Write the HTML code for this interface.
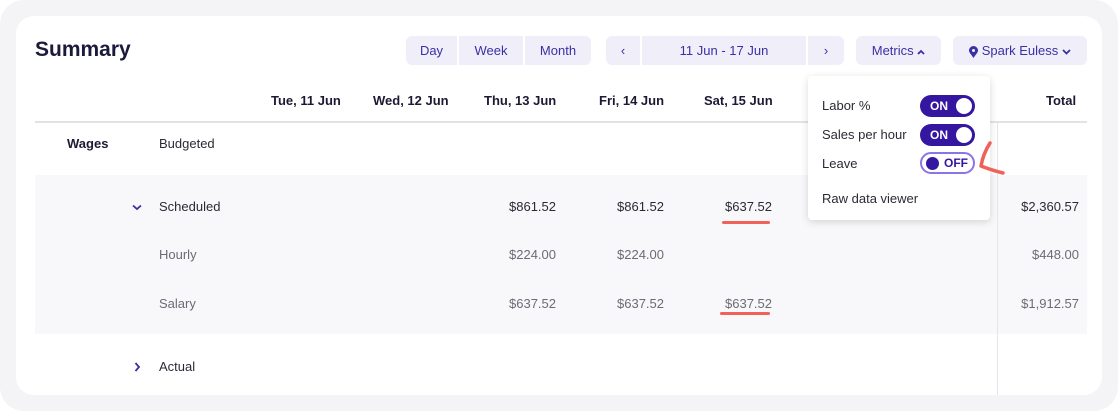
<!DOCTYPE html><html><head><style>
*{margin:0;padding:0;box-sizing:border-box}
body{width:1118px;height:411px;background:#fff;font-family:"Liberation Sans",sans-serif;position:relative;overflow:hidden}
.outer{position:absolute;left:0;top:0;width:1118px;height:411px;background:#f4f4f7;border-radius:24px}
.card{position:absolute;left:16px;top:16px;width:1086px;height:379px;background:#fff;border-radius:18px}
.a{position:absolute;white-space:nowrap}
.btn{position:absolute;top:36px;height:29px;background:#f0eff9;color:#3b2fa6;font-size:13px;line-height:29px;text-align:center}
.btn svg{vertical-align:middle}
.h{font-weight:bold;font-size:13px;color:#1c1a33;top:93px}
.r{text-align:right}
.v{font-size:13px;color:#2a2a35}
.g{font-size:13px;color:#6b6b75}
.tog{position:absolute;left:920px;width:55px;height:22px;border-radius:11px;background:#3416a0;color:#fff;font-size:12px;font-weight:bold;line-height:22px;padding-left:10px}
.tog i{position:absolute;right:3px;top:3px;width:16px;height:16px;border-radius:50%;background:#fff}
</style></head><body>
<div class="outer"></div><div class="card"></div>
<div class="a" style="left:35px;top:38px;font-size:21px;font-weight:bold;color:#1c1a3a">Summary</div>
<div class="btn" style="left:406px;width:51px;border-radius:6px 0 0 6px">Day</div>
<div class="btn" style="left:459px;width:64px">Week</div>
<div class="btn" style="left:525px;width:66px;border-radius:0 6px 6px 0">Month</div>
<div class="btn" style="left:606px;width:34px;border-radius:6px 0 0 6px">‹</div>
<div class="btn" style="left:642px;width:164px">11 Jun - 17 Jun</div>
<div class="btn" style="left:808px;width:36px;border-radius:0 6px 6px 0">›</div>
<div class="btn" style="left:856px;width:85px;border-radius:6px">Metrics <svg width="8" height="6" viewBox="0 0 8 6"><path d="M1 5 L4 2 L7 5" stroke="#3b2fa6" stroke-width="1.8" fill="none"/></svg></div>
<div class="btn" style="left:953px;width:134px;border-radius:6px"><svg width="9" height="12" viewBox="0 0 9 12"><path d="M4.5 12 C1 7 0 6 0 4.5 A4.5 4.5 0 0 1 9 4.5 C9 6 8 7 4.5 12Z M4.5 3 A1.5 1.5 0 1 0 4.5 6 A1.5 1.5 0 1 0 4.5 3Z" fill="#3b2fa6" fill-rule="evenodd"/></svg> Spark Euless <svg width="9" height="6" viewBox="0 0 9 6"><path d="M1 1 L4.5 4.5 L8 1" stroke="#3b2fa6" stroke-width="1.8" fill="none"/></svg></div>
<div class="a h" style="left:271px">Tue, 11 Jun</div>
<div class="a h" style="left:373px">Wed, 12 Jun</div>
<div class="a h" style="left:484px">Thu, 13 Jun</div>
<div class="a h" style="left:599px">Fri, 14 Jun</div>
<div class="a h" style="left:704px">Sat, 15 Jun</div>
<div class="a h" style="left:1046px">Total</div>
<div class="a" style="left:35px;top:121px;width:1052px;height:2px;background:#e2e2e6"></div>
<div class="a" style="left:35px;top:175px;width:1052px;height:159px;background:#f8f8fa"></div>
<div class="a" style="left:997px;top:122px;width:1px;height:273px;background:#e6e6ea"></div>
<div class="a" style="left:67px;top:136px;font-size:13px;font-weight:bold;color:#1c1a33">Wages</div>
<div class="a v" style="left:159px;top:136px">Budgeted</div>
<svg class="a" style="left:132px;top:204px" width="10" height="7" viewBox="0 0 10 7"><path d="M1 1.5 L5 5 L9 1.5" stroke="#3b2fa6" stroke-width="1.8" fill="none"/></svg>
<div class="a v" style="left:159px;top:199px">Scheduled</div>
<div class="a g" style="left:159px;top:247px">Hourly</div>
<div class="a g" style="left:159px;top:296px">Salary</div>
<svg class="a" style="left:134px;top:362px" width="7" height="10" viewBox="0 0 7 10"><path d="M1.5 1 L5 5 L1.5 9" stroke="#3b2fa6" stroke-width="1.8" fill="none"/></svg>
<div class="a v" style="left:159px;top:359px">Actual</div>
<div class="a v r" style="left:476px;width:80px;top:199px">$861.52</div>
<div class="a v r" style="left:584px;width:80px;top:199px">$861.52</div>
<div class="a v" style="left:725px;top:199px">$637.52</div>
<div class="a v r" style="left:1000px;width:79px;top:199px">$2,360.57</div>
<div class="a g r" style="left:476px;width:80px;top:247px">$224.00</div>
<div class="a g r" style="left:584px;width:80px;top:247px">$224.00</div>
<div class="a g r" style="left:1000px;width:79px;top:247px">$448.00</div>
<div class="a g r" style="left:476px;width:80px;top:296px">$637.52</div>
<div class="a g r" style="left:584px;width:80px;top:296px">$637.52</div>
<div class="a g" style="left:725px;top:296px">$637.52</div>
<div class="a g r" style="left:1000px;width:79px;top:296px">$1,912.57</div>
<div class="a" style="left:722px;top:221px;width:48px;height:3px;border-radius:2px;background:#f0615a"></div>
<div class="a" style="left:720px;top:312px;width:50px;height:3px;border-radius:2px;background:#f0615a"></div>
<div class="a" style="left:808px;top:76px;width:182px;height:144px;background:#fff;border-radius:4px;box-shadow:0 2px 8px rgba(0,0,0,.15)"></div>
<div class="a v" style="left:822px;top:98px">Labor %</div>
<div class="a v" style="left:822px;top:127px">Sales per hour</div>
<div class="a v" style="left:822px;top:156px">Leave</div>
<div class="a v" style="left:822px;top:191px">Raw data viewer</div>
<div class="tog" style="top:95px">ON<i></i></div>
<div class="tog" style="top:124px">ON<i></i></div>
<div class="tog" style="top:152px;background:#fff;border:2px solid #8b74e8;color:#3416a0;padding-left:22px;line-height:19px">OFF<i style="left:4px;top:3px;width:13px;height:13px;background:#3416a0"></i></div>
<svg class="a" style="left:976px;top:140px" width="32" height="36"><path d="M14 3 Q7 14 5 26 Q15 30 27 33" stroke="#f0615a" stroke-width="3.5" fill="none" stroke-linecap="round" stroke-linejoin="round"/></svg>
</body></html>
